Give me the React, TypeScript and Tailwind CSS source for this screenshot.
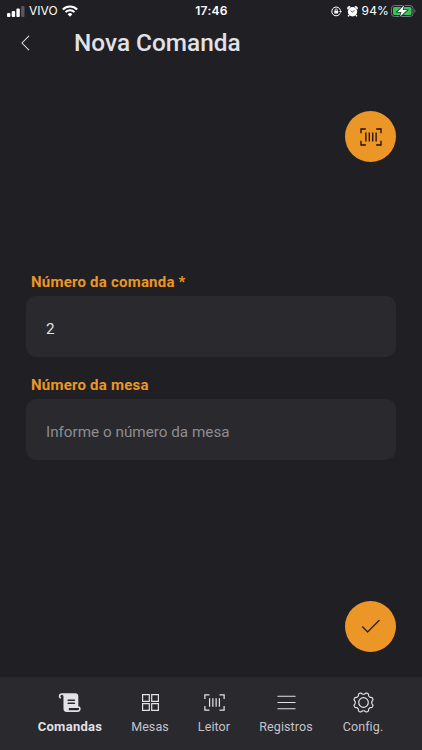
import type { ReactNode } from 'react';
import { PiCaretLeftLight, PiCheckLight, PiListLight, PiScrollFill } from 'react-icons/pi';

type IconProps = {
  size: number;
};

function BarcodeIcon({ size }: IconProps) {
  return (
    <svg width={size} height={size} viewBox="0 0 26 26" fill="none" stroke="currentColor" strokeWidth="1.3">
      <path d="M3 9.3V5h4.8M18.2 5H23v4.3M23 16.7V21h-4.8M7.8 21H3v-4.3" />
      <path d="M7.9 8.5v9M11.3 8.5v9M14.7 8.5v9M18.1 8.5v9" />
    </svg>
  );
}

function SquaresIcon({ size }: IconProps) {
  return (
    <svg width={size} height={size} viewBox="0 0 25 25" fill="none" stroke="currentColor" strokeWidth="1.2">
      <path d="M4.6 4.6h6.7v6.7H4.6zM13.7 4.6h6.7v6.7h-6.7zM4.6 13.7h6.7v6.7H4.6zM13.7 13.7h6.7v6.7h-6.7z" />
    </svg>
  );
}

// eight rounded teeth, with a notch at every 45 degrees
const gearOutline = Array.from({ length: 128 }, (_, i) => {
  const angle = (i / 128) * Math.PI * 2;
  const radius = 9.1 - 0.95 * Math.tanh(1.5 * Math.cos(angle * 8));
  return `${(12.5 + radius * Math.cos(angle)).toFixed(2)},${(12.5 + radius * Math.sin(angle)).toFixed(2)}`;
}).join(' ');

function GearIcon({ size }: IconProps) {
  return (
    <svg width={size} height={size} viewBox="0 0 25 25" fill="none" stroke="currentColor" strokeWidth="1.2">
      <polygon points={gearOutline} strokeLinejoin="round" />
      <circle cx="12.5" cy="12.5" r="4.8" />
    </svg>
  );
}

function StatusBar() {
  return (
    <div className="grid h-[22px] grid-cols-3 items-center pl-[7px] pr-[6px] font-[Inter,sans-serif] text-white">
      <div className="flex items-center">
        <svg width="18" height="11" viewBox="0 0 18 11" fill="currentColor">
          <rect x="0" y="7" width="3.4" height="4" rx="1" />
          <rect x="4.7" y="5" width="3.4" height="6" rx="1" />
          <rect x="9.4" y="2.5" width="3.4" height="8.5" rx="1" />
          <rect x="14.1" y="0" width="3.4" height="11" rx="1" opacity=".25" />
        </svg>
        <span className="ml-[4px] text-[12px] leading-4">VIVO</span>
        <svg className="ml-[4px]" width="16" height="12" viewBox="0 0 16 12" fill="none" stroke="currentColor">
          <path d="M.9 4.4a10.2 10.2 0 0 1 14.2 0" strokeWidth="2.1" />
          <path d="M3.5 7.1a6.4 6.4 0 0 1 9 0" strokeWidth="1.9" />
          <path d="m8 11.7-2.4-2.5a3.4 3.4 0 0 1 4.8 0Z" fill="currentColor" stroke="none" />
        </svg>
      </div>
      <span className="text-center text-[12px] font-semibold leading-4 tracking-[0.3px]">17:46</span>
      <div className="flex items-center justify-end">
        <svg width="11" height="11" viewBox="0 0 11 11" fill="none" stroke="currentColor">
          <path d="M9.2 7.2A4.4 4.4 0 1 1 9.5 4.6" />
          <path d="m8 5 3 0-1.4 1.7Z" fill="currentColor" stroke="none" />
          <rect x="3.3" y="4.8" width="3.8" height="2.8" rx=".4" fill="currentColor" stroke="none" />
          <path d="M4.1 5V4a1.1 1.1 0 0 1 2.2 0v1" strokeWidth=".8" />
        </svg>
        <svg className="ml-[5px]" width="11" height="11" viewBox="0 0 11 11">
          <path d="M1 3.2a1.6 1.6 0 0 1 2.2-2.2M7.8 1a1.6 1.6 0 0 1 2.2 2.2" fill="currentColor" stroke="currentColor" strokeWidth="1.2" />
          <path d="m2 9-.8 1.4M9 9l.8 1.4" stroke="currentColor" strokeWidth="1.5" />
          <circle cx="5.5" cy="5.8" r="4.7" fill="currentColor" />
          <path d="M5.6 6.2 3.8 4.8M5.6 6.2l1.7-2" fill="none" stroke="#202024" strokeWidth=".7" />
        </svg>
        <span className="ml-[4px] text-[12px] leading-4 tracking-[0.15px]">94%</span>
        <svg className="ml-[2px]" width="25" height="12" viewBox="0 0 25 12">
          <rect x=".5" y=".5" width="21.5" height="11" rx="3" fill="none" stroke="#737378" />
          <rect x="2" y="2" width="18.5" height="8" rx="1.6" fill="#34c759" />
          <path d="M23.3 4v4c1.5-.7 1.5-3.3 0-4Z" fill="#737378" />
          <path d="M13.1.2 6.2 6.9h4.2L9 11.8l7.1-6.7h-4.3Z" fill="#fff" stroke="#202024" strokeWidth="1.4" paintOrder="stroke" />
        </svg>
      </div>
    </div>
  );
}

type FieldProps = {
  label: string;
  value?: string;
  placeholder?: string;
};

function Field({ label, value, placeholder }: FieldProps) {
  return (
    <label className="block">
      <span className="block pl-[5px] text-[15px] font-bold leading-5 tracking-[0.22px] text-[#eb9626]">{label}</span>
      <input
        className="mt-[4px] block h-[61px] w-full rounded-[10px] bg-[#29292e] px-[20px] pt-[5px] text-[15.25px]
          text-[#e1e1e6] outline-none placeholder:text-[#8d8d92]"
        defaultValue={value}
        placeholder={placeholder}
      />
    </label>
  );
}

function RoundButton({ children }: { children: ReactNode }) {
  return (
    <button className="flex size-[51px] items-center justify-center rounded-full bg-[#eb9626] text-[#1c1008]">
      {children}
    </button>
  );
}

const tabs = [
  { label: 'Comandas', icon: PiScrollFill, width: 'w-[80px]', active: true },
  { label: 'Mesas', icon: SquaresIcon, width: 'w-[80px]' },
  { label: 'Leitor', icon: BarcodeIcon, width: 'w-[48px]' },
  { label: 'Registros', icon: PiListLight, width: 'w-[96px]' },
  { label: 'Config.', icon: GearIcon, width: 'w-[58px]' },
];

export default function App() {
  return (
    <div className="flex h-[750px] w-[422px] flex-col overflow-hidden bg-[#202024] font-[Roboto,sans-serif] text-[#e1e1e6]">
      <StatusBar />

      <header className="flex h-[42px] items-center pl-[15px]">
        <PiCaretLeftLight size={22} />
        <h1 className="ml-[37px] text-[24.4px] font-medium leading-8">Nova Comanda</h1>
      </header>

      <main className="flex flex-1 flex-col px-[26px] pt-[47px]">
        <div className="flex justify-end">
          <RoundButton>
            <BarcodeIcon size={26} />
          </RoundButton>
        </div>

        <div className="mt-[110px] flex flex-col gap-[18px]">
          <Field label="Número da comanda *" value="2" />
          <Field label="Número da mesa" placeholder="Informe o número da mesa" />
        </div>

        <div className="mt-auto flex justify-end pb-[25px]">
          <RoundButton>
            <PiCheckLight className="mb-[2px]" size={23} strokeWidth={3} stroke="currentColor" />
          </RoundButton>
        </div>
      </main>

      <nav className="flex h-[73px] bg-[#29292e] pl-[30px] pt-[13px]">
        {tabs.map(({ label, icon: Icon, width, active }) => (
          <a key={label} className={`flex flex-col items-center ${width}`}>
            <Icon size={25} />
            <span
              className={`mt-[4px] leading-4 ${
                active ? 'text-[13px] font-bold tracking-[0.3px]' : 'text-[12.5px] tracking-[0.1px] text-[#c4c4cc]'
              }`}
            >
              {label}
            </span>
          </a>
        ))}
      </nav>
    </div>
  );
}
